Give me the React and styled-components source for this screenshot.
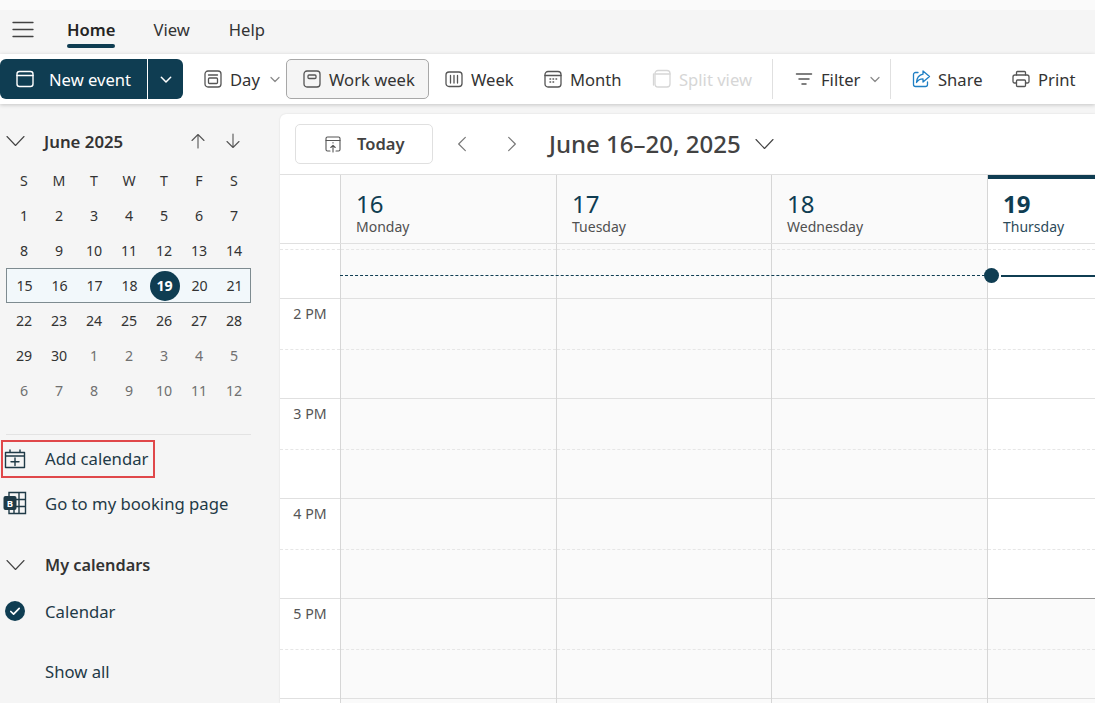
import React from "react";
import styled, { createGlobalStyle } from "styled-components";

const NAVY = "#0f3d52";
const INK = "#242424";

const GlobalStyle = createGlobalStyle`
  html, body {
    margin: 0;
    height: 100%;
    overflow: hidden;
    background: #f5f5f5;
    font-family: "Noto Sans", "Open Sans", sans-serif;
    color: ${INK};
  }
`;

const Page = styled.div`
  width: 1095px;
  height: 703px;
  display: flex;
  flex-direction: column;
  overflow: hidden;
`;

const TopStrip = styled.div`
  height: 10px;
  background: #fafafa;
`;

const TabBar = styled.div`
  height: 44px;
  box-sizing: border-box;
  display: flex;
  align-items: center;
  padding: 0 0 5px 12px;
`;

const Tab = styled.div`
  position: relative;
  margin-left: ${p => p.$ml}px;
  font-size: 16.6px;
  font-weight: ${p => (p.$active ? 600 : 400)};
  color: ${p => (p.$active ? "#242424" : "#333")};
  ${p =>
    p.$active &&
    `&::after {
      content: "";
      position: absolute;
      left: 0;
      right: 0;
      bottom: -7px;
      height: 4px;
      border-radius: 2px;
      background: ${NAVY};
    }`}
`;

const Toolbar = styled.div`
  height: 50px;
  background: #fff;
  box-shadow: 0 1px 4px rgba(0, 0, 0, 0.2);
  display: flex;
  align-items: center;
  position: relative;
  z-index: 1;
  white-space: nowrap;
`;

const SplitButton = styled.div`
  width: 183px;
  height: 40px;
  flex: none;
  display: flex;
  overflow: hidden;
  background: ${NAVY};
  color: #fff;
  font-size: 16.6px;
  border-radius: 6px;
`;

const SplitMain = styled.div`
  width: 148px;
  display: flex;
  align-items: center;
  gap: 14px;
  padding-left: 15px;
  box-sizing: border-box;
  border-right: 1px solid #fff;
`;

const SplitArrow = styled.div`
  flex: 1;
  display: flex;
  align-items: center;
  justify-content: center;
`;

const ToolButton = styled.div`
  height: 40px;
  box-sizing: border-box;
  flex: none;
  width: ${p => p.$w}px;
  display: flex;
  align-items: center;
  gap: 7px;
  padding-left: ${p => p.$pl || 0}px;
  font-size: 16.6px;
  color: ${p => (p.$disabled ? "#d6d6d6" : "#333")};
  border-radius: 5px;
  ${p => p.$selected && "background: #f5f5f5; border: 1px solid #a8a8a8;"}
`;

const ToolCaret = styled.span`
  margin-left: 2px;
  display: flex;
`;

const ToolDivider = styled.div`
  width: 1px;
  height: 40px;
  flex: none;
  background: #e0e0e0;
`;

const Body = styled.div`
  flex: 1;
  display: flex;
  min-height: 0;
  padding-top: 10px;
`;

const Sidebar = styled.aside`
  width: 280px;
  flex: none;
  box-sizing: border-box;
  padding-left: 6px;
`;

const MonthHeader = styled.div`
  height: 36px;
  margin-top: 9px;
  display: flex;
  align-items: center;
  font-size: 16.8px;
  font-weight: 600;
  color: #333;
`;

const MonthTitle = styled.span`
  margin-left: 18px;
  flex: 1;
`;

const MonthArrows = styled.div`
  display: flex;
  gap: 19px;
  padding-right: 39px;
  align-items: center;
`;

const CalGrid = styled.div`
  display: grid;
  grid-template-columns: repeat(7, 35px);
  grid-auto-rows: 35px;
  width: 245px;
  margin: 4px 0 0 0.5px;
`;

const WeekRow = styled.div`
  grid-column: 1 / -1;
  display: grid;
  grid-template-columns: repeat(7, 35px);
  margin: 0 0.5px 0 -0.5px;
  border: 1px solid #7e8b90;
  background: #f2f8fb;
  box-sizing: border-box;
`;

const Cell = styled.div`
  display: flex;
  align-items: center;
  justify-content: center;
  font-size: 14.2px;
  color: ${p => (p.$muted ? "#707070" : "#333")};
`;

const TodayDot = styled.span`
  width: 30px;
  height: 30px;
  border-radius: 50%;
  background: ${NAVY};
  color: #fff;
  font-weight: 700;
  display: flex;
  align-items: center;
  justify-content: center;
`;

const SideRule = styled.div`
  height: 1px;
  width: 245px;
  background: #e3e3e3;
  margin-top: 26px;
`;

const NavItem = styled.div`
  position: relative;
  height: ${p => p.$h}px;
  margin-top: ${p => p.$mt || 0}px;
  display: flex;
  align-items: center;
  font-size: ${p => (p.$bold ? 16.3 : 16.7)}px;
  font-weight: ${p => (p.$bold ? 600 : 400)};
  color: ${p => (p.$bold ? "#333" : "#1f3a47")};
`;

const NavIcon = styled.span`
  width: 42px;
  margin-left: -3px;
  padding-left: ${p => p.$inset || 0}px;
  box-sizing: border-box;
  display: flex;
  flex: none;
`;

const NavGroupIcon = styled.span`
  width: 39px;
  display: flex;
  flex: none;
`;

const Highlight = styled.div`
  position: absolute;
  left: -5px;
  top: 5px;
  width: 154px;
  height: 38px;
  border: 2px solid #e0484a;
  box-sizing: border-box;
`;

const Main = styled.main`
  flex: 1;
  min-width: 0;
  background: #fff;
  border-top-left-radius: 6px;
  display: flex;
  flex-direction: column;
  box-shadow: 0 0 2px rgba(0, 0, 0, 0.12);
`;

const DateBar = styled.div`
  height: 61px;
  flex: none;
  box-sizing: border-box;
  display: flex;
  align-items: center;
  padding-left: 15px;
  border-bottom: 1px solid #e0e0e0;
`;

const TodayButton = styled.div`
  width: 138px;
  height: 40px;
  box-sizing: border-box;
  border: 1px solid #e0e0e0;
  border-radius: 5px;
  display: flex;
  align-items: center;
  gap: 15px;
  padding: 0 0 1px 28px;
  font-size: 16.5px;
  font-weight: 600;
  color: #424242;
`;

const RangeNav = styled.div`
  display: flex;
  gap: 30px;
  margin-left: 19px;
  align-items: center;
`;

const RangeTitle = styled.div`
  margin: -2px 0 0 27px;
  font-size: 24px;
  font-weight: 500;
  color: #424242;
`;

const RangeCaret = styled.span`
  margin-left: 14px;
  display: flex;
`;

const DayHeaders = styled.div`
  height: 69px;
  flex: none;
  box-sizing: border-box;
  display: grid;
  grid-template-columns: 60px 216px 215px 216px 1fr;
  border-bottom: 1px solid #e0e0e0;
`;

const Gutter = styled.div`
  background: #fff;
`;

const DayHeader = styled.div`
  box-sizing: border-box;
  border-left: 1px solid #d6d6d6;
  background: ${p => (p.$today ? "#fff" : "#fafafa")};
  padding: 14px 0 0 15px;
  position: relative;
  ${p =>
    p.$today &&
    `&::before {
      content: "";
      position: absolute;
      left: 0;
      right: 0;
      top: 0;
      height: 4px;
      background: ${NAVY};
    }`}
`;

const DayNum = styled.div`
  font-size: 24px;
  line-height: 30px;
  font-weight: ${p => (p.$today ? 700 : 400)};
  color: ${NAVY};
`;

const DayName = styled.div`
  font-size: 14px;
  line-height: 16px;
  color: ${p => (p.$today ? "#2d4a5a" : "#505050")};
`;

const TimeGrid = styled.div`
  position: relative;
  flex: 1;
  min-height: 0;
  display: grid;
  grid-template-columns: 60px 216px 215px 216px 1fr;
  overflow: hidden;
`;

const TimeCol = styled.div`
  background: #fff;
`;

const DayCol = styled.div`
  box-sizing: border-box;
  border-left: 1px solid #d6d6d6;
  background: #fafafa;
`;

const Lead = styled.div`
  height: 55px;
  box-sizing: border-box;
  border-bottom: 1px solid #e0e0e0;
  background: ${p => (p.$white ? "#fff" : "transparent")};
  &::before {
    content: "";
    display: block;
    height: 6px;
    box-sizing: border-box;
    border-bottom: 1px dashed #e6e6e6;
  }
`;

const HourSlot = styled.div`
  height: 100px;
  box-sizing: border-box;
  border-bottom: 1px solid ${p => (p.$strong ? "#9a9a9a" : "#e0e0e0")};
  background: ${p => (p.$white ? "#fff" : "transparent")};
  position: relative;
  &::after {
    content: "";
    position: absolute;
    left: 0;
    right: 0;
    top: 50px;
    border-top: 1px dashed #e6e6e6;
  }
`;

const TimeSlot = styled(HourSlot)`
  padding-top: 6px;
  text-align: center;
  font-size: 14.2px;
  line-height: 18px;
  color: #555;
`;

const NowDashed = styled.div`
  position: absolute;
  left: 60px;
  width: 645px;
  top: 31px;
  border-top: 1px dashed ${NAVY};
`;

const NowDot = styled.div`
  position: absolute;
  left: 704px;
  top: 24px;
  width: 15px;
  height: 15px;
  border-radius: 50%;
  background: ${NAVY};
`;

const NowLine = styled.div`
  position: absolute;
  left: 721px;
  right: 0;
  top: 31px;
  height: 2px;
  background: ${NAVY};
`;

const Ic = ({ size = 20, color = "#555", sw = 1.3, children, vb = 20 }) => (
  <svg
    width={size}
    height={size}
    viewBox={`0 0 ${vb} ${vb}`}
    fill="none"
    stroke={color}
    strokeWidth={sw}
    strokeLinecap="round"
    strokeLinejoin="round"
    style={{ flex: "none", display: "block" }}
  >
    {children}
  </svg>
);

const Chevron = ({ size = 12, color = "#666", dir = "down", sw = 1.2 }) => {
  const d = {
    down: "M2 4.5 L6 8.5 L10 4.5",
    left: "M8 2 L4 6 L8 10",
    right: "M4 2 L8 6 L4 10"
  }[dir];
  return (
    <Ic size={size} color={color} sw={sw} vb={12}>
      <path d={d} />
    </Ic>
  );
};

// the long flat caret used on section headers
const WideChevron = () => (
  <Ic size={20} color="#444" sw={1.1}>
    <path d="M1 5.5l8.5 9 8.500-9" />
  </Ic>
);

const HamburgerIcon = () => (
  <Ic size={22} color="#424242" sw={1.3} vb={22}>
    <path d="M1 3.500h20M1 10.500h20M1 17.500h20" />
  </Ic>
);

const NewEventIcon = () => (
  <Ic size={20} color="#fff" sw={1.4}>
    <rect x="2" y="2.500" width="16" height="15" rx="2.500" />
    <path d="M2 6.500h16" />
  </Ic>
);

const DayIcon = () => (
  <Ic size={20}>
    <rect x="2" y="2" width="16" height="16" rx="3" />
    <path d="M5.500 6h9" />
    <rect x="5.500" y="9" width="9" height="5.500" rx="1" />
  </Ic>
);

const WorkWeekIcon = () => (
  <Ic size={20}>
    <rect x="2" y="2" width="16" height="16" rx="3" />
    <rect x="6" y="6" width="8" height="3.500" rx="1" />
  </Ic>
);

const WeekIcon = () => (
  <Ic size={20}>
    <rect x="2" y="3" width="16" height="14.500" rx="3" />
    <path d="M6.500 6.500v7.500M10 6.500v7.500M13.500 6.500v7.500" />
  </Ic>
);

const MonthIcon = () => (
  <Ic size={20}>
    <rect x="2" y="2.500" width="16" height="15.500" rx="3" />
    <path d="M2 6.500h16" />
    <path d="M7 10h.6M10 10h.6M13 10h.6M7 13h.6M10 13h.6" strokeWidth="1.5" />
  </Ic>
);

const SplitIcon = () => (
  <Ic size={20} color="#d6d6d6">
    <rect x="3" y="1.500" width="15" height="16.500" rx="3" />
    <path d="M3 5h15M1.500 5v11" />
  </Ic>
);

const FilterIcon = () => (
  <Ic size={20} color="#555" sw={1.5}>
    <path d="M2.500 5h15M5 10h10M8 15h4" />
  </Ic>
);

const ShareIcon = () => (
  <Ic size={20} color="#1f7fc4">
    <path d="M7 3.500H4.500A2 2 0 0 0 2.500 5.500v10a2 2 0 0 0 2 2h10a2 2 0 0 0 2-2V13" />
    <path d="M12 2l6.500 5.500L12 13V9.800c-3 0-5 1-6.500 3.700C5.800 9 8 6 12 5.200z" />
  </Ic>
);

const PrintIcon = () => (
  <Ic size={20}>
    <path d="M5.500 6V3.500a1 1 0 0 1 1-1h7a1 1 0 0 1 1 1V6" />
    <path d="M5.500 14H3.500a1.500 1.500 0 0 1-1.500-1.500V8A2 2 0 0 1 4 6h12a2 2 0 0 1 2 2v4.500a1.500 1.500 0 0 1-1.500 1.500h-2" />
    <rect x="5.500" y="11" width="9" height="6.500" rx="1" />
  </Ic>
);

const ArrowIcon = ({ up }) => (
  <Ic size={16} color="#555" sw={1.1} vb={16}>
    <path d={up ? "M8 15V1.500M2 7.500l6-6 6 6" : "M8 1v13.500M2 8.500l6 6 6-6"} />
  </Ic>
);

const AddCalendarIcon = () => (
  <Ic size={22} color="#1f3a47" sw={1.4} vb={22}>
    <path d="M1.500 4.500h19v15h-19zM1.500 8h19M6 2v2.500M16 2v2.500M11 10v7.500M7 13.750h8" />
  </Ic>
);

const BookingsIcon = () => (
  <svg width="24" height="24" viewBox="0 0 24 24" style={{ display: "block", flex: "none" }}>
    <g fill="none" stroke="#1f3a47" strokeWidth="1.4">
      <path d="M6 1.500h16.500v21H6zM16 1.500v21M11 15v7.500M6 8.500h16.500M6 15.500h16.500" />
    </g>
    <rect x="0.500" y="5" width="13" height="14" rx="2" fill="#1f3a47" />
    <text x="7" y="15.500" fontSize="9.500" fontWeight="700" fill="#fff" textAnchor="middle" fontFamily="Noto Sans, sans-serif">
      B
    </text>
  </svg>
);

const CheckCircleIcon = () => (
  <svg width="20" height="20" viewBox="0 0 20 20" style={{ display: "block", flex: "none" }}>
    <circle cx="10" cy="10" r="10" fill={NAVY} />
    <path d="M5.800 10.500l2.800 2.700 5.600-5.800" fill="none" stroke="#fff" strokeWidth="1.7" strokeLinecap="round" strokeLinejoin="round" />
  </svg>
);

const TodayIcon = () => (
  <Ic size={18} color="#555" sw={1.1} vb={18}>
    <path d="M6 16H3.500A1.500 1.500 0 0 1 2 14.500V3.500A1.500 1.500 0 0 1 3.500 2h11A1.500 1.500 0 0 1 16 3.500v11a1.500 1.500 0 0 1-1.500 1.500H12" />
    <path d="M2 5.500h14M9 17V10.500M6.800 12.500L9 10.300l2.200 2.200M9 7.500v.4" />
  </Ic>
);

const weeks = [
  [1, 2, 3, 4, 5, 6, 7],
  [8, 9, 10, 11, 12, 13, 14],
  [15, 16, 17, 18, 19, 20, 21],
  [22, 23, 24, 25, 26, 27, 28],
  [29, 30, 1, 2, 3, 4, 5],
  [6, 7, 8, 9, 10, 11, 12]
];

const days = [
  { num: 16, name: "Monday" },
  { num: 17, name: "Tuesday" },
  { num: 18, name: "Wednesday" },
  { num: 19, name: "Thursday", today: true }
];

const hours = ["2 PM", "3 PM", "4 PM", "5 PM"];

const MiniCalendar = () => (
  <CalGrid>
    {["S", "M", "T", "W", "T", "F", "S"].map((d, i) => (
      <Cell key={i}>{d}</Cell>
    ))}
    {weeks.map((week, w) =>
      w === 2 ? (
        <WeekRow key={w}>
          {week.map(d => (
            <Cell key={d}>{d === 19 ? <TodayDot>{d}</TodayDot> : d}</Cell>
          ))}
        </WeekRow>
      ) : (
        week.map((d, i) => (
          <Cell key={`${w}-${i}`} $muted={(w === 4 && i > 1) || w === 5}>
            {d}
          </Cell>
        ))
      )
    )}
  </CalGrid>
);

const App = () => (
  <Page>
    <GlobalStyle />
    <TopStrip />
    <TabBar>
      <HamburgerIcon />
      <Tab $active $ml={33}>Home</Tab>
      <Tab $ml={38}>View</Tab>
      <Tab $ml={39}>Help</Tab>
    </TabBar>
    <Toolbar>
      <SplitButton>
        <SplitMain>
          <NewEventIcon />
          New event
        </SplitMain>
        <SplitArrow>
          <Chevron size={14} color="#fff" sw={1.3} />
        </SplitArrow>
      </SplitButton>
      <ToolButton $w={103} $pl={20}>
        <DayIcon />
        Day
        <ToolCaret><Chevron size={12} color="#888" /></ToolCaret>
      </ToolButton>
      <ToolButton $w={143} $pl={15} $selected>
        <WorkWeekIcon />
        Work week
      </ToolButton>
      <ToolButton $w={114} $pl={15}>
        <WeekIcon />
        Week
      </ToolButton>
      <ToolButton $w={109}>
        <MonthIcon />
        Month
      </ToolButton>
      <ToolButton $w={120} $disabled>
        <SplitIcon />
        Split view
      </ToolButton>
      <ToolDivider />
      <ToolButton $w={117} $pl={21}>
        <FilterIcon />
        Filter
        <ToolCaret><Chevron size={12} color="#888" /></ToolCaret>
      </ToolButton>
      <ToolDivider />
      <ToolButton $w={120} $pl={20}>
        <ShareIcon />
        Share
      </ToolButton>
      <ToolButton $w={70}>
        <PrintIcon />
        Print
      </ToolButton>
    </Toolbar>
    <Body>
      <Sidebar>
        <MonthHeader>
          <WideChevron />
          <MonthTitle>June 2025</MonthTitle>
          <MonthArrows>
            <ArrowIcon up />
            <ArrowIcon />
          </MonthArrows>
        </MonthHeader>
        <MiniCalendar />
        <SideRule />
        <NavItem $h={47}>
          <Highlight />
          <NavIcon $inset={1}><AddCalendarIcon /></NavIcon>
          Add calendar
        </NavItem>
        <NavItem $h={42}>
          <NavIcon><BookingsIcon /></NavIcon>
          Go to my booking page
        </NavItem>
        <NavItem $h={40} $mt={21} $bold>
          <NavGroupIcon><WideChevron /></NavGroupIcon>
          My calendars
        </NavItem>
        <NavItem $h={42} $mt={5}>
          <NavIcon $inset={2}><CheckCircleIcon /></NavIcon>
          Calendar
        </NavItem>
        <NavItem $h={42} $mt={18}>
          <NavIcon />
          Show all
        </NavItem>
      </Sidebar>
      <Main>
        <DateBar>
          <TodayButton>
            <TodayIcon />
            Today
          </TodayButton>
          <RangeNav>
            <Chevron size={20} dir="left" sw={0.7} color="#777" />
            <Chevron size={20} dir="right" sw={0.7} color="#777" />
          </RangeNav>
          <RangeTitle>June 16–20, 2025</RangeTitle>
          <RangeCaret><WideChevron /></RangeCaret>
        </DateBar>
        <DayHeaders>
          <Gutter />
          {days.map(d => (
            <DayHeader key={d.num} $today={d.today}>
              <DayNum $today={d.today}>{d.num}</DayNum>
              <DayName $today={d.today}>{d.name}</DayName>
            </DayHeader>
          ))}
        </DayHeaders>
        <TimeGrid>
          <TimeCol>
            <Lead />
            {hours.map(h => (
              <TimeSlot key={h}>{h}</TimeSlot>
            ))}
          </TimeCol>
          {days.map(d => (
            <DayCol key={d.num}>
              <Lead $white={d.today} />
              {hours.map((h, i) => (
                <HourSlot
                  key={h}
                  $white={d.today && i < 3}
                  $strong={d.today && i === 2}
                />
              ))}
            </DayCol>
          ))}
          <NowDashed />
          <NowDot />
          <NowLine />
        </TimeGrid>
      </Main>
    </Body>
  </Page>
);

export default App;
